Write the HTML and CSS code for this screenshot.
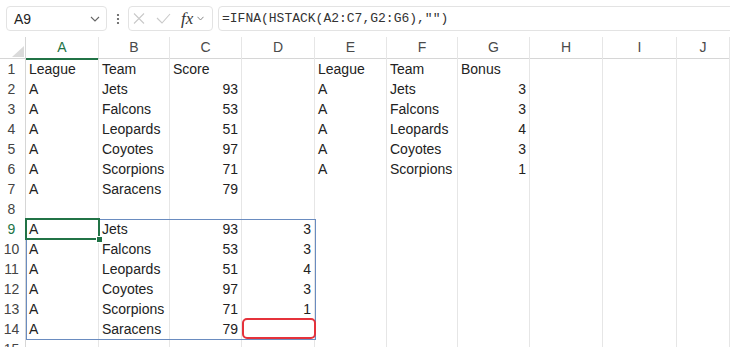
FILE: index.html
```html
<!DOCTYPE html>
<html lang="en">
<head>
    <meta charset="UTF-8">
    <title>IFNA HSTACK</title>
    <link rel="stylesheet" href="styles.css">
</head>
<body>
    <div class="toolbar">
        <div class="namebox">
            <span>A9</span>
            <svg class="chev" width="10" height="6" viewBox="0 0 10 6"><path d="M1 1 L5 5 L9 1" fill="none" stroke="#666" stroke-width="1.1"/></svg>
        </div>
        <div class="dots">
            <svg width="4" height="12" viewBox="0 0 4 12"><circle cx="2" cy="2" r="1.1" fill="#555"/><circle cx="2" cy="6" r="1.1" fill="#555"/><circle cx="2" cy="10" r="1.1" fill="#555"/></svg>
        </div>
        <div class="fxbox">
            <svg class="ico-x" width="12" height="11" viewBox="0 0 12 11"><path d="M1 0.5 L11 10.5 M11 0.5 L1 10.5" stroke="#c9c9c9" stroke-width="1.1"/></svg>
            <svg class="ico-ok" width="15" height="11" viewBox="0 0 15 11"><path d="M1 5 L6 10 L14 1" fill="none" stroke="#c9c9c9" stroke-width="1.1"/></svg>
            <span class="fx">fx</span>
            <svg class="ico-dd" width="7" height="5" viewBox="0 0 7 5"><path d="M0.5 0.8 L3.5 4 L6.5 0.8" fill="none" stroke="#888" stroke-width="1"/></svg>
        </div>
        <div class="formula">=IFNA(HSTACK(A2:C7,G2:G6),"")</div>
    </div>

    <div class="sheet">
        <div class="row head">
            <div class="corner">
                <svg width="12" height="11" viewBox="0 0 12 11"><polygon points="12,0 12,11 0,11" fill="#dadada"/></svg>
            </div>
            <div class="ch sel">A</div><div class="ch">B</div><div class="ch">C</div><div class="ch">D</div><div class="ch">E</div>
            <div class="ch">F</div><div class="ch">G</div><div class="ch">H</div><div class="ch">I</div><div class="ch">J</div>
        </div>

        <div class="row"><div class="rh">1</div><div class="c">League</div><div class="c">Team</div><div class="c">Score</div><div class="c"></div><div class="c">League</div><div class="c">Team</div><div class="c">Bonus</div><div class="c"></div><div class="c"></div><div class="c"></div></div>
        <div class="row"><div class="rh">2</div><div class="c">A</div><div class="c">Jets</div><div class="c n">93</div><div class="c"></div><div class="c">A</div><div class="c">Jets</div><div class="c n">3</div><div class="c"></div><div class="c"></div><div class="c"></div></div>
        <div class="row"><div class="rh">3</div><div class="c">A</div><div class="c">Falcons</div><div class="c n">53</div><div class="c"></div><div class="c">A</div><div class="c">Falcons</div><div class="c n">3</div><div class="c"></div><div class="c"></div><div class="c"></div></div>
        <div class="row"><div class="rh">4</div><div class="c">A</div><div class="c">Leopards</div><div class="c n">51</div><div class="c"></div><div class="c">A</div><div class="c">Leopards</div><div class="c n">4</div><div class="c"></div><div class="c"></div><div class="c"></div></div>
        <div class="row"><div class="rh">5</div><div class="c">A</div><div class="c">Coyotes</div><div class="c n">97</div><div class="c"></div><div class="c">A</div><div class="c">Coyotes</div><div class="c n">3</div><div class="c"></div><div class="c"></div><div class="c"></div></div>
        <div class="row"><div class="rh">6</div><div class="c">A</div><div class="c">Scorpions</div><div class="c n">71</div><div class="c"></div><div class="c">A</div><div class="c">Scorpions</div><div class="c n">1</div><div class="c"></div><div class="c"></div><div class="c"></div></div>
        <div class="row"><div class="rh">7</div><div class="c">A</div><div class="c">Saracens</div><div class="c n">79</div><div class="c"></div><div class="c"></div><div class="c"></div><div class="c"></div><div class="c"></div><div class="c"></div><div class="c"></div></div>
        <div class="row"><div class="rh">8</div><div class="c"></div><div class="c"></div><div class="c"></div><div class="c"></div><div class="c"></div><div class="c"></div><div class="c"></div><div class="c"></div><div class="c"></div><div class="c"></div></div>
        <div class="row"><div class="rh sel">9</div><div class="c">A</div><div class="c">Jets</div><div class="c n">93</div><div class="c n">3</div><div class="c"></div><div class="c"></div><div class="c"></div><div class="c"></div><div class="c"></div><div class="c"></div></div>
        <div class="row"><div class="rh">10</div><div class="c">A</div><div class="c">Falcons</div><div class="c n">53</div><div class="c n">3</div><div class="c"></div><div class="c"></div><div class="c"></div><div class="c"></div><div class="c"></div><div class="c"></div></div>
        <div class="row"><div class="rh">11</div><div class="c">A</div><div class="c">Leopards</div><div class="c n">51</div><div class="c n">4</div><div class="c"></div><div class="c"></div><div class="c"></div><div class="c"></div><div class="c"></div><div class="c"></div></div>
        <div class="row"><div class="rh">12</div><div class="c">A</div><div class="c">Coyotes</div><div class="c n">97</div><div class="c n">3</div><div class="c"></div><div class="c"></div><div class="c"></div><div class="c"></div><div class="c"></div><div class="c"></div></div>
        <div class="row"><div class="rh">13</div><div class="c">A</div><div class="c">Scorpions</div><div class="c n">71</div><div class="c n">1</div><div class="c"></div><div class="c"></div><div class="c"></div><div class="c"></div><div class="c"></div><div class="c"></div></div>
        <div class="row"><div class="rh">14</div><div class="c">A</div><div class="c">Saracens</div><div class="c n">79</div><div class="c"></div><div class="c"></div><div class="c"></div><div class="c"></div><div class="c"></div><div class="c"></div><div class="c"></div></div>
        <div class="row"><div class="rh">15</div><div class="c"></div><div class="c"></div><div class="c"></div><div class="c"></div><div class="c"></div><div class="c"></div><div class="c"></div><div class="c"></div><div class="c"></div><div class="c"></div></div>

        <!-- overlays: spill range, active cell, highlight -->
        <div class="spill"></div>
        <div class="active"><span class="handle"></span></div>
        <div class="mark"></div>
    </div>
</body>
</html>
```

FILE: styles.css
```css
* { margin: 0; padding: 0; box-sizing: border-box; }
body { font-family: 'Liberation Sans', Arial, sans-serif; background: #fff; color: #222; overflow: hidden; }

.toolbar { display: flex; align-items: center; height: 37px; padding: 6px 0 6px 6px; }
.namebox { width: 101px; height: 25px; border: 1px solid #e3e3e3; border-radius: 4px; display: flex; align-items: center; justify-content: space-between; padding: 0 6px 0 7px; font-size: 14px; color: #222; }
.dots { width: 21px; display: flex; justify-content: center; }
.fxbox { width: 85px; height: 25px; border: 1px solid #e3e3e3; border-radius: 4px; display: flex; align-items: center; padding-left: 4px; }
.ico-ok { margin-left: 11px; }
.fx { font-family: 'Liberation Serif', serif; font-style: italic; font-size: 17px; color: #333; margin-left: 10px; }
.ico-dd { margin-left: 4px; }
.formula { flex: 1; margin-left: 5px; margin-right: -10px; height: 25px; border: 1px solid #e3e3e3; border-radius: 4px; display: flex; align-items: center; padding-left: 3px; font-family: 'Liberation Mono', monospace; font-size: 13px; color: #333; }

.sheet { position: relative; }
.row { display: grid; grid-template-columns: 26px 73px 71px 72px 73px 72px 71px 72px 73px 74px 1fr; height: 20px; }
.row.head { height: 22px; border-bottom: 1px solid #d6d6d6; }
.corner { display: flex; align-items: flex-end; justify-content: flex-end; padding: 0 1px 3px 0; border-right: 1px solid #d6d6d6; }
.ch { text-align: center; font-size: 14px; line-height: 21px; color: #4a4a4a; border-right: 1px solid #e6e6e6; }
.ch.sel { color: #217346; border-bottom: 2px solid #217346; }
.rh { text-align: center; font-size: 14px; line-height: 20px; color: #444; border-right: 1px solid #d6d6d6; padding-right: 2px; }
.rh.sel { color: #217346; }
.c { font-size: 14px; line-height: 20px; padding: 0 3px; border-right: 1px solid #e6e6e6; white-space: nowrap; overflow: hidden; }
.c.n { text-align: right; }

.spill { position: absolute; left: 26px; top: 182px; width: 290px; height: 121px; border: 1px solid #6a8cc0; }
.active { position: absolute; left: 25px; top: 181px; width: 75px; height: 22px; border: 2px solid #217346; }
.handle { position: absolute; right: -5px; bottom: -5px; width: 7px; height: 7px; background: #217346; border: 1px solid #fff; }
.mark { position: absolute; left: 242px; top: 281px; width: 74px; height: 21px; border: 2px solid #e5323b; border-radius: 5px; }
```
